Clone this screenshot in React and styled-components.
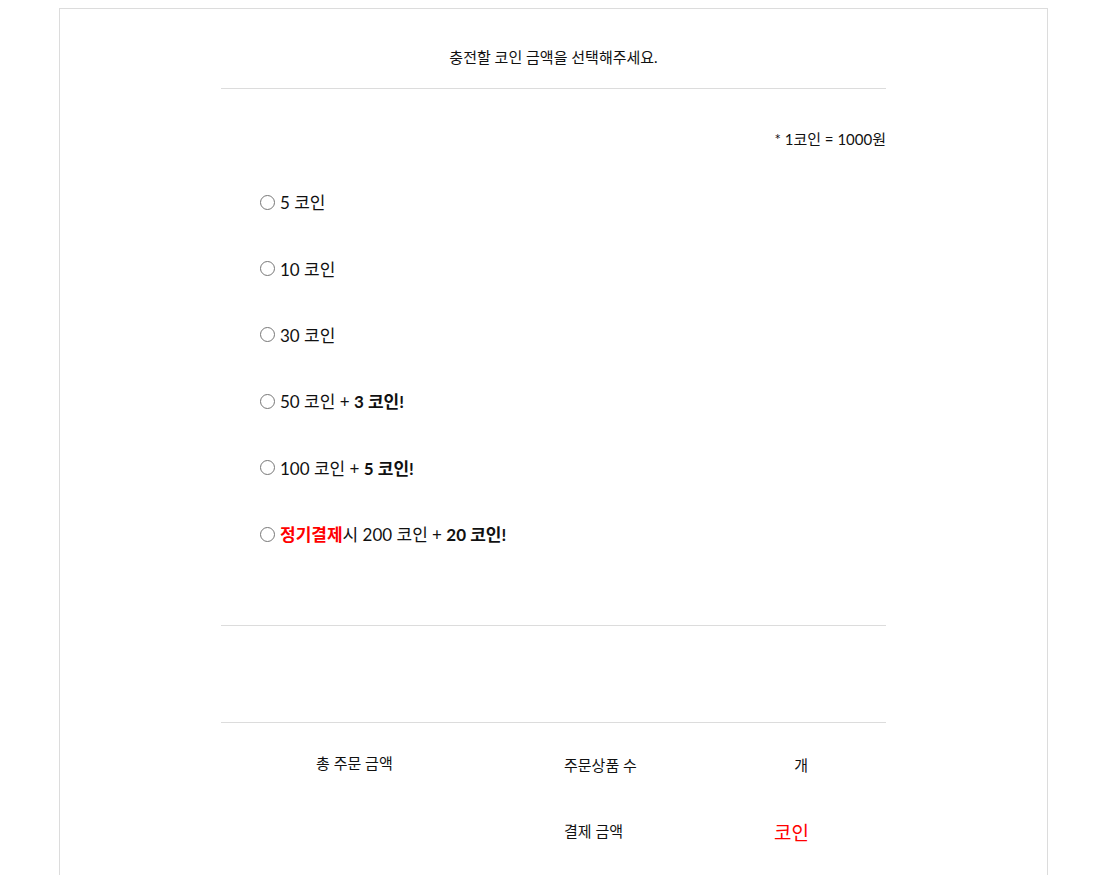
import React from "react";
import styled, { createGlobalStyle } from "styled-components";

const Global = createGlobalStyle`
  html, body { overflow: hidden; }
  body {
    margin: 8px;
    background: #fff;
    color: #111;
    font-family: Lato, "Noto Sans CJK KR", sans-serif;
  }
`;

const Frame = styled.div`
  width: 987px;
  margin-left: 51px;
  min-height: 900px;
  border: 1px solid #dcdcdc;
  border-bottom: none;
  background: #fff;
`;

const Inner = styled.div`
  width: 665px;
  margin: 0 auto;
`;

const Title = styled.h2`
  margin: 0;
  padding: 38px 0 21px;
  font-size: 15px;
  line-height: 20px;
  font-weight: 400;
  text-align: center;
  border-bottom: 1px solid #dcdcdc;
`;

const Rate = styled.p`
  margin: 40px 0 0;
  font-size: 15px;
  line-height: 20px;
  text-align: right;
`;

const Options = styled.div`
  display: flex;
  flex-direction: column;
  padding: 21px 0 57px 34px;
  border-bottom: 1px solid #dcdcdc;
`;

const Option = styled.label`
  display: flex;
  align-items: center;
  height: 66.4px;
  font-size: 17px;
  line-height: 20px;
  cursor: pointer;
`;

const Radio = styled.input.attrs({ type: "radio", name: "coin" })`
  width: 15px;
  height: 15px;
  margin: 0 3px 2px 5px;
`;

const Text = styled.span`
  margin-left: 2px;
  white-space: pre;
`;

const Strong = styled.b`
  font-weight: 700;
  color: ${(p) => (p.$red ? "#ff0000" : "#111")};
`;

const Spacer = styled.div`
  height: 96px;
  border-bottom: 1px solid #dcdcdc;
`;

const Summary = styled.div`
  display: grid;
  grid-template-columns: 343px 1fr 1fr;
  grid-template-rows: 66px 66px;
  padding-top: 8px;
  font-size: 15px;
`;

const Cell = styled.div`
  display: flex;
  align-items: center;
  justify-content: ${(p) => (p.$right ? "flex-end" : "flex-start")};
  padding-left: ${(p) => p.$pl || 0}px;
  padding-right: ${(p) => p.$pr || 0}px;
  margin-top: ${(p) => p.$mt || 0}px;
  color: ${(p) => (p.$red ? "#ff0000" : "#111")};
  font-size: ${(p) => p.$size || 15}px;
`;

const options = [
  { base: "5 코인" },
  { base: "10 코인" },
  { base: "30 코인" },
  { base: "50 코인 + ", bonus: "3 코인!" },
  { base: "100 코인 + ", bonus: "5 코인!" },
  { red: "정기결제", base: "시 200 코인 + ", bonus: "20 코인!" },
];

export default function App() {
  return (
    <>
      <Global />
      <Frame>
        <Inner>
          <Title>충전할 코인 금액을 선택해주세요.</Title>
          <Rate>* 1코인 = 1000원</Rate>
          <Options>
            {options.map((o, i) => (
              <Option key={i}>
                <Radio value={i} />
                <Text>
                  {o.red && <Strong $red>{o.red}</Strong>}
                  {o.base}
                  {o.bonus && <Strong>{o.bonus}</Strong>}
                </Text>
              </Option>
            ))}
          </Options>
          <Spacer />
          <Summary>
            <Cell $pl={95} $mt={-3}>총 주문 금액</Cell>
            <Cell>주문상품 수</Cell>
            <Cell $right $pr={78}>개</Cell>
            <div />
            <Cell>결제 금액</Cell>
            <Cell $right $pr={77} $mt={3} $red $size={19}>코인</Cell>
          </Summary>
        </Inner>
      </Frame>
    </>
  );
}
